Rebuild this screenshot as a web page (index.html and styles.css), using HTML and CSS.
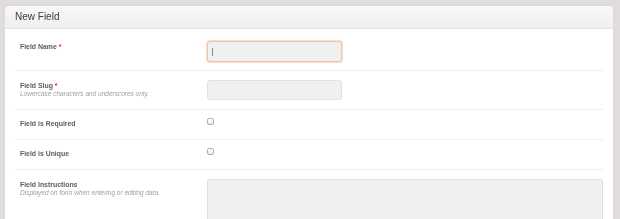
FILE: index.html
```html
<!DOCTYPE html>
<html>
<head>
<meta charset="utf-8">
<link rel="stylesheet" href="styles.css">
</head>
<body>
<div class="page">
  <section class="card">
    <header class="card-head"><h2 class="card-title">New Field</h2></header>
    <div class="card-body">
      <div class="row row-first">
        <div class="label-col"><div class="label">Field Name <span class="req">*</span></div></div>
        <div class="input-col"><div class="text-input focused"><span class="caret"></span></div></div>
      </div>
      <div class="row">
        <div class="label-col"><div class="label">Field Slug <span class="req">*</span></div><div class="hint">Lowercase characters and underscores only.</div></div>
        <div class="input-col"><div class="text-input"></div></div>
      </div>
      <div class="row row-check">
        <div class="label-col"><div class="label">Field is Required</div></div>
        <div class="input-col"><span class="checkbox"></span></div>
      </div>
      <div class="row row-check">
        <div class="label-col"><div class="label">Field is Unique</div></div>
        <div class="input-col"><span class="checkbox"></span></div>
      </div>
      <div class="row row-last">
        <div class="label-col"><div class="label">Field Instructions</div><div class="hint">Displayed on form when entering or editing data.</div></div>
        <div class="input-col"><div class="textarea"></div></div>
      </div>
    </div>
  </section>
</div>
</body>
</html>
```

FILE: styles.css
```css
html, body {
  margin: 0;
  padding: 0;
  background: #e0dcdb;
  font-family: "Liberation Sans", Arial, sans-serif;
  overflow: hidden;
  height: 219px;
}
.page {
  padding: 6px 7px 0 5px;
}
.card {
  background: #fff;
  border-radius: 4px 4px 0 0;
  box-shadow: 0 0 1px rgba(0,0,0,0.15);
  height: 213px;
  overflow: hidden;
  will-change: transform;
}
.card-head {
  height: 22px;
  border-bottom: 1px solid #e4e4e4;
  border-radius: 4px 4px 0 0;
  background: linear-gradient(#f8f8f8, #efefef);
  display: flex;
  align-items: center;
  padding-left: 10px;
}
.card-title {
  margin: 0;
  font-size: 10px;
  font-weight: normal;
  color: #3a3a3a;
  line-height: 12px;
}
.card-body {
  padding: 0 10px;
}
.row {
  display: grid;
  grid-template-columns: 192px 1fr;
  padding: 9px 0;
  border-bottom: 1px solid #efefef;
}
.row-first {
  padding-top: 12px;
  padding-bottom: 8px;
}
.row-check {
  padding: 8px 0;
  min-height: 13px;
}
.row-last {
  border-bottom: none;
}
.label-col {
  padding: 2px 0 0 5px;
}
.label {
  font-size: 6.9px;
  line-height: 8px;
  font-weight: bold;
  color: #5c5c5c;
}
.req {
  color: #d22;
}
.hint {
  font-size: 6.5px;
  line-height: 7px;
  font-style: italic;
  color: #a0a0a0;
}
.text-input {
  box-sizing: border-box;
  width: 135px;
  height: 20px;
  background: #f0f0f0;
  border: 1px solid #e0e0e0;
  border-radius: 3px;
  display: flex;
  align-items: center;
  padding-left: 4px;
}
.text-input.focused {
  height: 21px;
  border-color: #f3c2a2;
  box-shadow: 0 0 1px 0.5px #f9dcc8;
}
.caret {
  width: 1px;
  height: 8px;
  background: #888;
}
.checkbox {
  display: block;
  box-sizing: border-box;
  width: 7px;
  height: 7px;
  border: 1px solid #b0b0b0;
  border-radius: 2px;
  background: linear-gradient(#fff, #ececec);
}
.textarea {
  box-sizing: border-box;
  height: 60px;
  background: #f0f0f0;
  border: 1px solid #dedede;
  border-radius: 3px;
}
```
